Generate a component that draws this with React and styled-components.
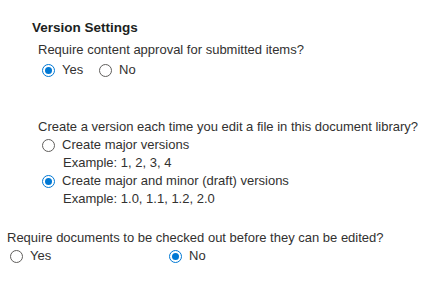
import React from 'react';
import styled, { createGlobalStyle } from 'styled-components';

const GlobalStyle = createGlobalStyle`
  body {
    margin: 0;
    background: #ffffff;
    font-family: "Liberation Sans", Arial, sans-serif;
    color: #323130;
  }
`;

const Page = styled.div`
  width: 445px;
  height: 291px;
  padding: 18px 0 0 7px;
  box-sizing: border-box;
`;

const Section = styled.div`
  padding-left: ${p => p.indent || 0}px;
  margin-bottom: ${p => p.gap || 0}px;
`;

const Heading = styled.div`
  font-weight: bold;
  font-size: 13.5px;
  line-height: 20px;
  color: #201f1e;
  margin-left: 25px;
  margin-bottom: 3px;
`;

const Question = styled.div`
  font-size: 13px;
  line-height: 18px;
  margin-bottom: ${p => p.gap || 0}px;
`;

const Options = styled.div`
  display: flex;
  flex-direction: ${p => (p.inline ? 'row' : 'column')};
  padding-left: ${p => p.indent || 4}px;
`;

const Option = styled.label`
  display: flex;
  align-items: center;
  gap: 7px;
  font-size: 13px;
  line-height: 18px;
  width: ${p => (p.width ? `${p.width}px` : 'auto')};
`;

const Circle = styled.span`
  width: 13px;
  height: 13px;
  box-sizing: border-box;
  border-radius: 50%;
  border: 1px solid ${p => (p.checked ? '#0078d4' : '#605e5c')};
  display: flex;
  align-items: center;
  justify-content: center;
  flex-shrink: 0;

  &::after {
    content: '';
    display: ${p => (p.checked ? 'block' : 'none')};
    width: 7px;
    height: 7px;
    border-radius: 50%;
    background: #0078d4;
  }
`;

const Example = styled.div`
  font-size: 13px;
  line-height: 18px;
  padding-left: 21px;
`;

function Radio({ checked, label, width }) {
  return (
    <Option width={width}>
      <Circle checked={checked} />
      {label}
    </Option>
  );
}

export default function App() {
  return (
    <Page>
      <GlobalStyle />
      <Heading>Version Settings</Heading>
      <Section indent={31} gap={39}>
        <Question gap={2}>Require content approval for submitted items?</Question>
        <Options inline>
          <Radio checked label="Yes" width={57} />
          <Radio label="No" />
        </Options>
      </Section>
      <Section indent={31} gap={21}>
        <Question>Create a version each time you edit a file in this document library?</Question>
        <Options>
          <Radio label="Create major versions" />
          <Example>Example: 1, 2, 3, 4</Example>
          <Radio checked label="Create major and minor (draft) versions" />
          <Example>Example: 1.0, 1.1, 1.2, 2.0</Example>
        </Options>
      </Section>
      <Section>
        <Question>Require documents to be checked out before they can be edited?</Question>
        <Options inline indent={3}>
          <Radio label="Yes" width={159} />
          <Radio checked label="No" />
        </Options>
      </Section>
    </Page>
  );
}
